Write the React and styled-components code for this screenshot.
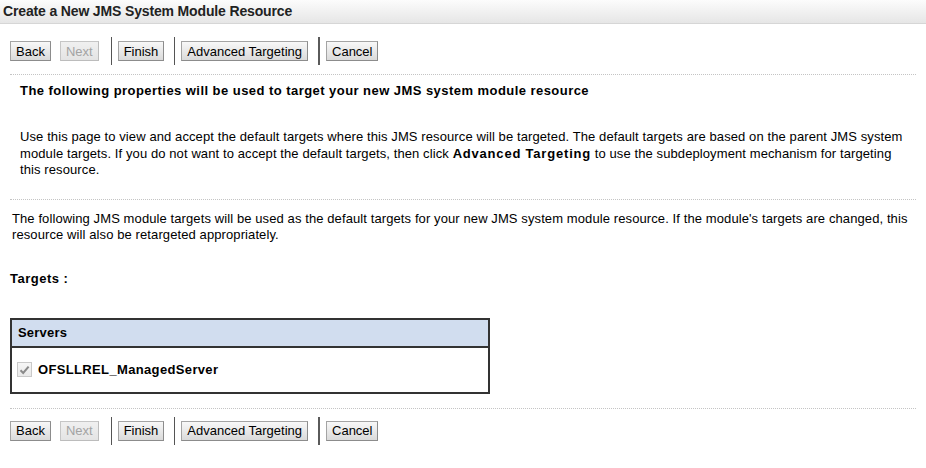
import React from 'react'
import styled, { createGlobalStyle } from 'styled-components'

const GlobalStyle = createGlobalStyle`
  body {
    margin: 0;
    background: #fff;
    color: #000;
    font-family: "Liberation Sans", Arial, sans-serif;
    font-size: 13px;
  }
`

const Page = styled.div`
  width: 926px;
`

const TitleBar = styled.div`
  height: 23px;
  line-height: 23px;
  padding-left: 3px;
  font-weight: bold;
  font-size: 14px;
  letter-spacing: -0.15px;
  color: #222;
  background: linear-gradient(#fcfcfc, #f2f2f2 45%, #e6e6e6);
  border-bottom: 1px solid #d6d6d6;
`

const ButtonBar = styled.div`
  display: flex;
  align-items: center;
  padding: ${props => props.top ? '13px' : '8px'} 10px 0;
  height: 28px;
`

const Button = styled.button`
  height: 20px;
  padding: 0 5px;
  margin-right: ${props => props.gap || 10}px;
  font-family: "Liberation Sans", Arial, sans-serif;
  font-size: 13px;
  color: ${props => props.disabled ? '#a3a3a3' : '#000'};
  background: ${props => props.disabled
    ? 'linear-gradient(#f0f0f0, #e4e4e4)'
    : 'linear-gradient(#f8f8f8, #e9e9e9 50%, #dadada)'};
  border: 1px solid ${props => props.disabled ? '#c6c6c6' : '#a4a4a4'};
  border-bottom-color: ${props => props.disabled ? '#bcbcbc' : '#8c8c8c'};
  border-right-color: ${props => props.disabled ? '#bcbcbc' : '#8c8c8c'};
  border-radius: 0;
  cursor: default;
`

const Separator = styled.span`
  width: ${props => props.thick ? 2 : 1}px;
  height: 28px;
  background: ${props => props.thick ? '#5a5a5a' : '#555'};
  margin-right: 6px;
`

const Dotted = styled.div`
  margin: ${props => props.top || 0}px 10px 0;
  border-top: 1px dotted #c4c4c4;
`

const Intro = styled.div`
  padding: 8px 16px 0 20px;
`

const Heading = styled.div`
  font-weight: bold;
  font-size: 13px;
  line-height: 16px;
  letter-spacing: 0.45px;
`

const Para = styled.p`
  margin: ${props => props.top}px 0 0;
  line-height: ${props => props.lh || 16.5}px;
  letter-spacing: 0.1px;

  b {
    letter-spacing: 0.8px;
  }
`

const Section = styled.div`
  padding: 0 6px 0 12px;
`

const Label = styled.div`
  margin: 28px 0 0 10px;
  font-weight: bold;
  line-height: 16px;
  letter-spacing: 0.5px;
`

const Table = styled.div`
  margin: 31px 0 0 10px;
  width: 476px;
  border: 2px solid #333;
`

const HeaderCell = styled.div`
  height: 26px;
  line-height: 26px;
  padding-left: 6px;
  background: #d1ddef;
  border-bottom: 2px solid #333;
  font-weight: bold;
  font-size: 13px;
  letter-spacing: 0.2px;
`

const Row = styled.div`
  display: flex;
  align-items: center;
  height: 44px;
  padding-left: 5px;
  gap: 6px;
  font-weight: bold;
  font-size: 13px;
  letter-spacing: 0.35px;
`

const CheckBox = styled.span`
  display: inline-flex;
  align-items: center;
  justify-content: center;
  width: 13px;
  height: 13px;
  border: 1px solid #c9c9c9;
  background: linear-gradient(#f6f6f6, #e9e9e9);
`

function Buttons({ top }) {
  return (
    <ButtonBar top={top}>
      <Button gap={9}>Back</Button>
      <Button disabled gap={12}>Next</Button>
      <Separator />
      <Button>Finish</Button>
      <Separator />
      <Button>Advanced Targeting</Button>
      <Separator thick />
      <Button>Cancel</Button>
    </ButtonBar>
  )
}

export default function App() {
  return (
    <Page>
      <GlobalStyle />
      <TitleBar>Create a New JMS System Module Resource</TitleBar>
      <Buttons top />
      <Dotted top={9} />
      <Intro>
        <Heading>The following properties will be used to target your new JMS system module resource</Heading>
        <Para top={30}>
          Use this page to view and accept the default targets where this JMS resource will be targeted. The default
          targets are based on the parent JMS system module targets. If you do not want to accept the default targets,
          then click <b>Advanced Targeting</b> to use the subdeployment mechanism for targeting this resource.
        </Para>
      </Intro>
      <Dotted top={20} />
      <Section>
        <Para top={11} lh={16}>
          The following JMS module targets will be used as the default targets for your new JMS system module
          resource. If the module's targets are changed, this resource will also be retargeted appropriately.
        </Para>
      </Section>
      <Label>Targets :</Label>
      <Table>
        <HeaderCell>Servers</HeaderCell>
        <Row>
          <CheckBox>
            <svg width="11" height="10" viewBox="0 0 11 10">
              <path d="M1.5 5.2 L4.2 8 L9.6 1.6" fill="none" stroke="#8a8a8a" strokeWidth="2" />
            </svg>
          </CheckBox>
          OFSLLREL_ManagedServer
        </Row>
      </Table>
      <Dotted top={14} />
      <Buttons />
    </Page>
  )
}
